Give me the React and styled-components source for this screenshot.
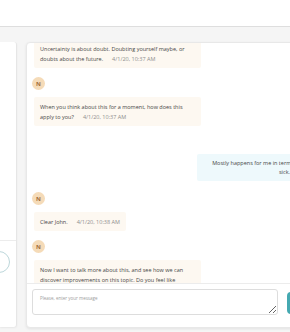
import React from "react";
import styled, { createGlobalStyle } from "styled-components";

const messages = [
    { id: 1, from: "bot", avatar: false, text: "Uncertainty is about doubt. Doubting yourself maybe, or doubts about the future.", time: "4/1/20, 10:37 AM" },
    { id: 2, from: "bot", avatar: true, text: "When you think about this for a moment, how does this apply to you?", time: "4/1/20, 10:37 AM" },
    { id: 3, from: "user", text: "Mostly happens for me in terms of my health, when I am sick." },
    { id: 4, from: "bot", avatar: true, text: "Clear John.", time: "4/1/20, 10:38 AM" },
    { id: 5, from: "bot", avatar: true, text: "Now I want to talk more about this, and see how we can discover improvements on this topic. Do you feel like continuing with this now?", time: "4/1/20, 10:38 AM" },
];

export default function App() {
    return (
        <>
            <GlobalStyle />
            <Header />
            <Main>
                <SidePanel>
                    <SideTop />
                    <SideBottom>
                        <Ring />
                    </SideBottom>
                </SidePanel>
                <ChatPanel>
                    <MessageList>
                        {messages.map((m, i) =>
                            m.from === "user" ? (
                                <UserBubble key={m.id}>{m.text}</UserBubble>
                            ) : (
                                <React.Fragment key={m.id}>
                                    {m.avatar && (
                                        <Avatar $afterUser={messages[i - 1]?.from === "user"}>N</Avatar>
                                    )}
                                    <BotBubble $first={i === 0}>
                                        {m.text}
                                        <Time>{m.time}</Time>
                                    </BotBubble>
                                </React.Fragment>
                            )
                        )}
                    </MessageList>
                    <InputBar>
                        <MessageInput placeholder="Please, enter your message" />
                        <SendButton />
                    </InputBar>
                </ChatPanel>
            </Main>
        </>
    );
}

const GlobalStyle = createGlobalStyle`
    html, body {
        margin: 0;
        padding: 0;
        height: 100%;
        overflow: hidden;
        background: #f5f5f5;
    }
    body {
        font-family: "Open Sans", Lato, sans-serif;
        color: #4a4a4a;
    }
`
const Header = styled.div`
    height: 26px;
    background: #ffffff;
    border-bottom: 1px solid #dedede;
`
const Main = styled.div`
    width: 390px;
    display: flex;
    flex-direction: row;
    gap: 9px;
    padding-top: 15px;
`
const SidePanel = styled.div`
    width: 16px;
    height: 285px;
    background: #ffffff;
    border-right: 1px solid #e6e6e6;
    border-radius: 0 3px 3px 0;
    box-shadow: 0 1px 2px rgba(0, 0, 0, 0.06);
    display: flex;
    flex-direction: column;
    overflow: hidden;
`
const SideTop = styled.div`
    height: 198px;
    border-bottom: 1px solid #ececec;
`
const SideBottom = styled.div`
    padding-top: 10px;
`
const Ring = styled.div`
    width: 20px;
    height: 20px;
    margin-left: -12px;
    border-radius: 50%;
    border: 1px solid #bcd6da;
    background: #ffffff;
`
const ChatPanel = styled.div`
    flex: 1;
    height: 284px;
    background: #ffffff;
    border: 1px solid #e8e8e8;
    border-radius: 4px;
    box-shadow: 0 1px 3px rgba(0, 0, 0, 0.08);
    display: flex;
    flex-direction: column;
    overflow: hidden;
`
const MessageList = styled.div`
    height: 240px;
    overflow: hidden;
    padding-left: 7px;
    display: flex;
    flex-direction: column;
    align-items: flex-start;
`
const BotBubble = styled.div`
    max-width: 167px;
    box-sizing: border-box;
    margin-top: ${(p) => (p.$first ? "-4px" : "7px")};
    padding: 5px 6px 4px;
    background: #fdf8f1;
    border-radius: 2px;
    font-size: 5.5px;
    line-height: 10px;
    color: #474747;
    flex-shrink: 0;
`
const Time = styled.span`
    margin-left: 9px;
    color: #8e8e8e;
`
const UserBubble = styled.div`
    align-self: flex-start;
    margin-left: 163px;
    margin-top: 28px;
    width: 175px;
    box-sizing: border-box;
    padding: 5px 15px 4px;
    background: #eef9fc;
    border-radius: 2px;
    font-size: 5.5px;
    line-height: 9px;
    text-align: center;
    color: #474747;
    flex-shrink: 0;
`
const Avatar = styled.div`
    width: 13px;
    height: 13px;
    margin-top: ${(p) => (p.$afterUser ? "11px" : "9px")};
    margin-left: -2px;
    border-radius: 50%;
    background: #f5dbb8;
    color: #a06d3b;
    font-size: 6px;
    font-weight: 700;
    display: flex;
    align-items: center;
    justify-content: center;
    flex-shrink: 0;
`
const InputBar = styled.div`
    flex: 1;
    border-top: 1px solid #ececec;
    padding: 5px 0 0 5px;
    display: flex;
    flex-direction: row;
    align-items: flex-start;
    gap: 9px;
`
const MessageInput = styled.textarea`
    width: 246px;
    height: 26px;
    box-sizing: border-box;
    border: 1px solid #dddddd;
    border-radius: 3px;
    padding: 5px 7px;
    font-family: "Open Sans", sans-serif;
    font-size: 4.5px;
    color: #555;
    outline: none;
    &::placeholder {
        color: #9d9d9d;
    }
`
const SendButton = styled.button`
    margin-top: 3px;
    width: 30px;
    height: 22px;
    border: none;
    border-radius: 4px;
    background: #45a9b1;
`
